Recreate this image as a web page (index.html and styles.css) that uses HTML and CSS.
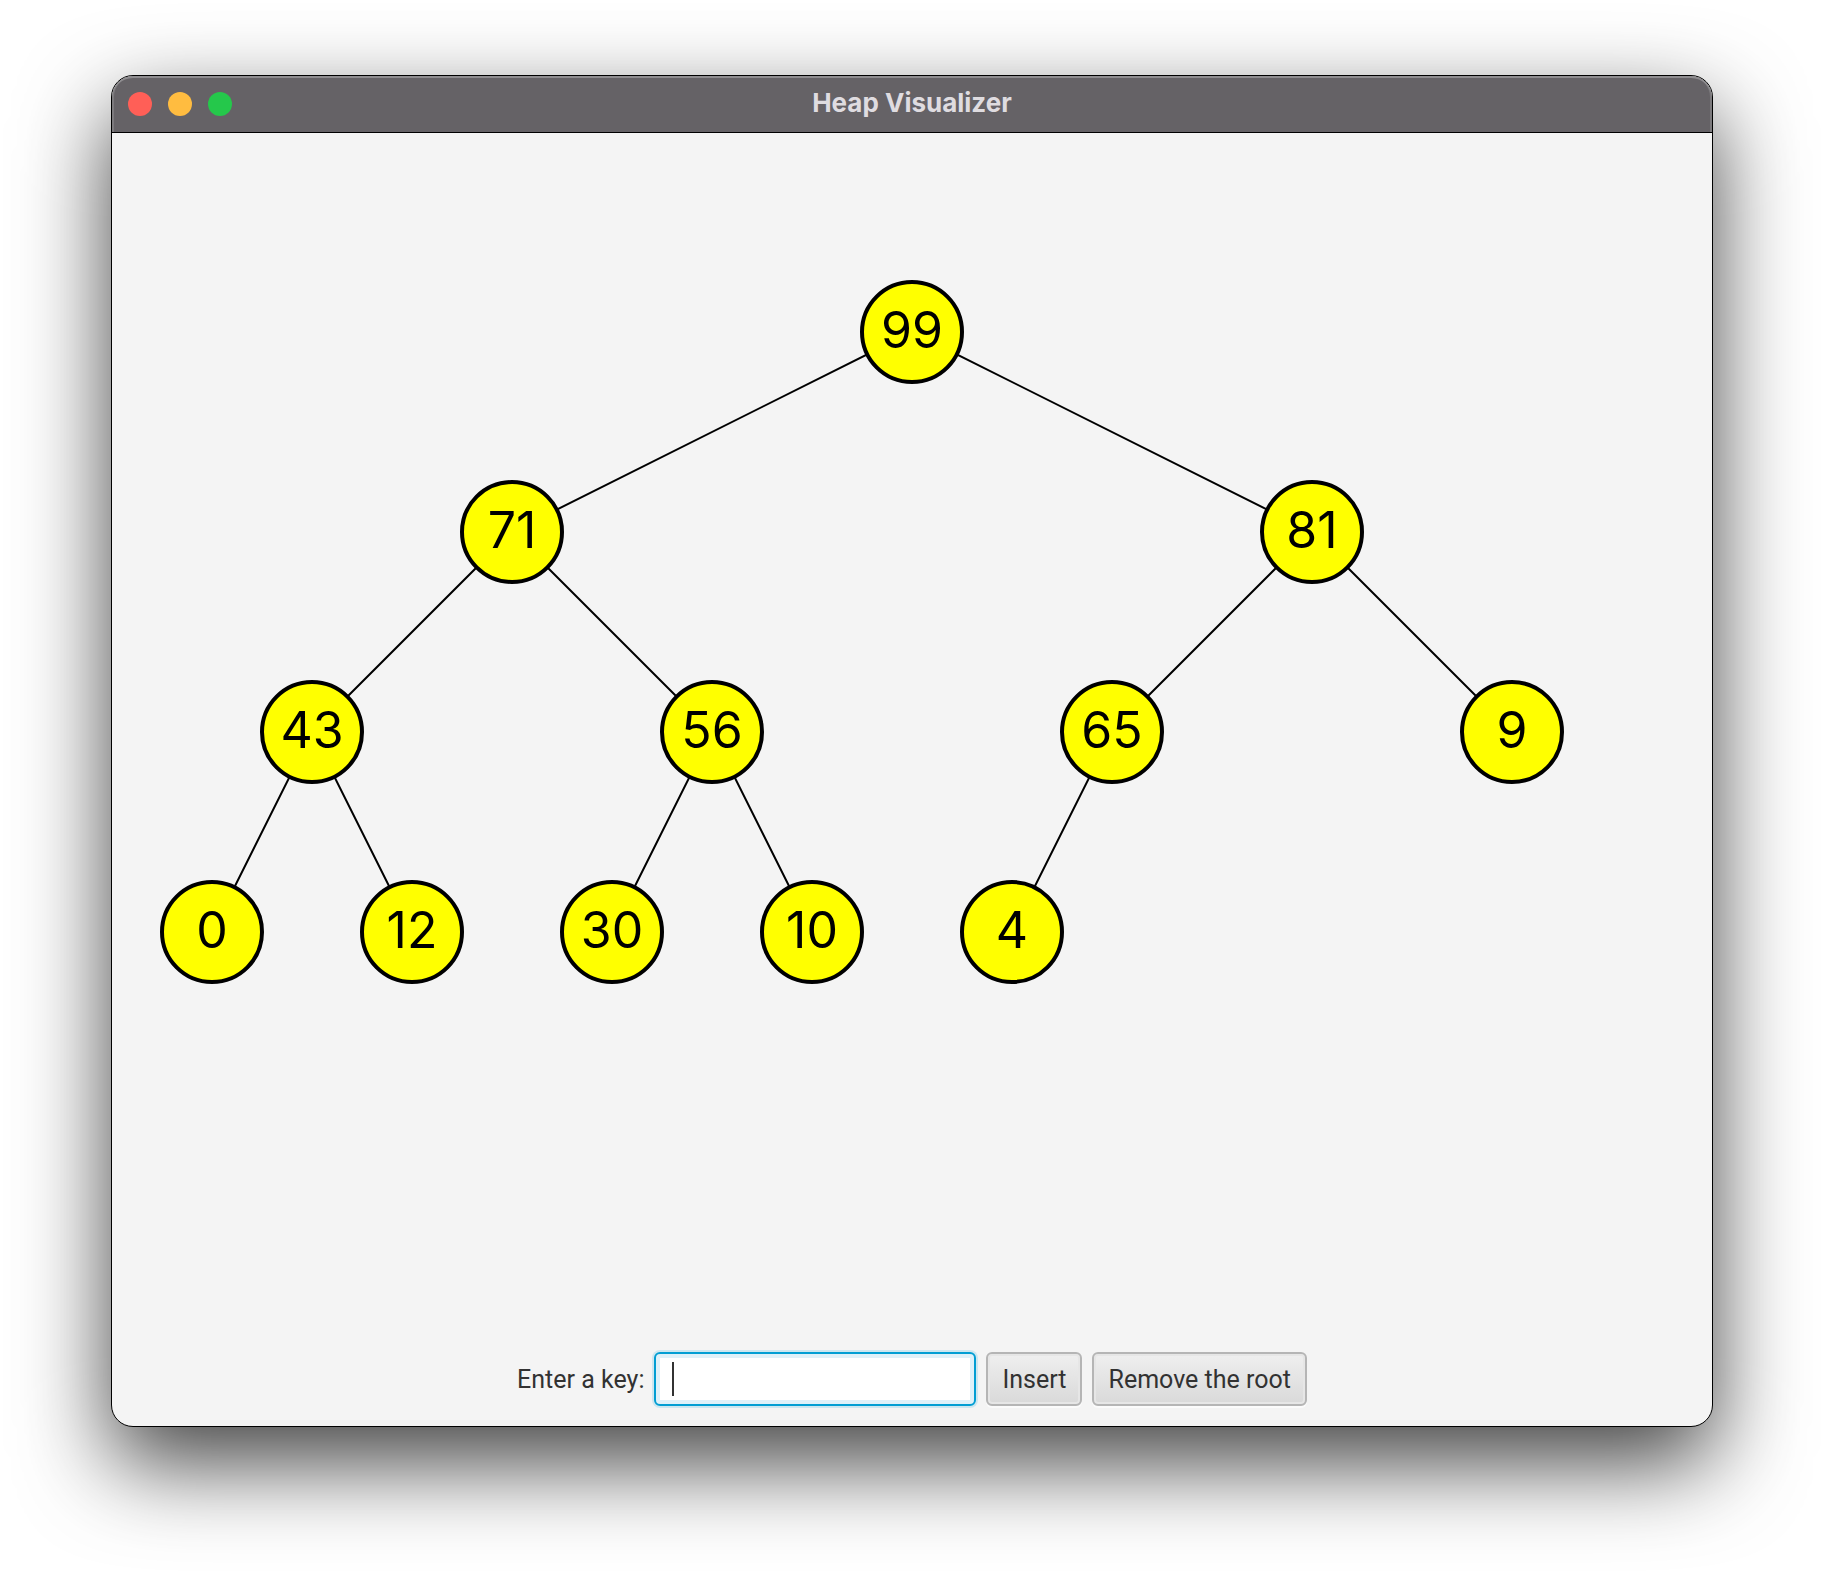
FILE: index.html
```html
<!DOCTYPE html>
<html lang="en">
<head>
<meta charset="utf-8">
<title>Heap Visualizer</title>
<link rel="stylesheet" href="styles.css">
</head>
<body>
<main class="window">
  <header class="titlebar">
    <div class="lights">
      <button class="light close" type="button" aria-label="Close"></button>
      <button class="light minimize" type="button" aria-label="Minimize"></button>
      <button class="light maximize" type="button" aria-label="Maximize"></button>
    </div>
    <h1 class="title">Heap Visualizer</h1>
  </header>
  <svg class="tree" viewBox="0 1 1600 1199" role="img" aria-label="Heap tree">
    <g class="edges">
      <path d="M800 200L400 400M800 200L1200 400"/>
      <path d="M400 400L200 600M400 400L600 600M1200 400L1000 600M1200 400L1400 600"/>
      <path d="M200 600L100 800M200 600L300 800M600 600L500 800M600 600L700 800M1000 600L900 800"/>
    </g>
    <g class="nodes">
      <circle cx="800" cy="200" r="50"/><text x="800" y="216">99</text>
      <circle cx="400" cy="400" r="50"/><text x="400" y="416">71</text>
      <circle cx="1200" cy="400" r="50"/><text x="1200" y="416">81</text>
      <circle cx="200" cy="600" r="50"/><text x="200" y="616">43</text>
      <circle cx="600" cy="600" r="50"/><text x="600" y="616">56</text>
      <circle cx="1000" cy="600" r="50"/><text x="1000" y="616">65</text>
      <circle cx="1400" cy="600" r="50"/><text x="1400" y="616">9</text>
      <circle cx="100" cy="800" r="50"/><text x="100" y="816">0</text>
      <circle cx="300" cy="800" r="50"/><text x="300" y="816">12</text>
      <circle cx="500" cy="800" r="50"/><text x="500" y="816">30</text>
      <circle cx="700" cy="800" r="50"/><text x="700" y="816">10</text>
      <circle cx="900" cy="800" r="50"/><text x="900" y="816">4</text>
    </g>
  </svg>
  <form class="controls">
    <label for="key">Enter a key:</label>
    <input class="field" id="key" type="text" autocomplete="off">
    <button class="button" type="button">Insert</button>
    <button class="button" type="button">Remove the root</button>
  </form>
</main>
</body>
</html>
```
FILE: styles.css
```css
* {
  box-sizing: border-box;
}

body {
  margin: 0;
  padding: 75px 111px 147px;
  background: #fff;
  font-family: Roboto, "Liberation Sans", sans-serif;
  font-size: 25px;
  color: #323232;
}

.window {
  overflow: hidden;
  border: 1px solid #000;
  border-radius: 22px;
  background: #f4f4f4;
  box-shadow: 0 36px 90px rgba(0, 0, 0, 0.74);
}

.titlebar {
  display: grid;
  grid-template-columns: 1fr auto 1fr;
  align-items: center;
  height: 57px;
  padding: 0 16px;
  border-bottom: 1px solid #000;
  border-radius: 21px 21px 0 0;
  background: #656266;
  box-shadow: inset 0 2px #8f8d90, inset 2px 0 #7c7a7d, inset -2px 0 #7c7a7d;
}

.lights {
  display: flex;
  gap: 16px;
}

.light {
  width: 24px;
  height: 24px;
  padding: 0;
  border: 0;
  border-radius: 50%;
}

.close {
  background: #ff5f57;
}

.minimize {
  background: #ffbc40;
}

.maximize {
  background: #25c84b;
}

.title {
  margin: 0;
  padding-bottom: 2px;
  font: bold 26px/52px Inter, sans-serif;
  color: #dfdce0;
}

.tree {
  display: block;
  width: 100%;
  height: auto;
}

.edges {
  fill: none;
  stroke: #000;
  stroke-width: 2;
}

.nodes circle {
  fill: #ff0;
  stroke: #000;
  stroke-width: 4;
}

.nodes text {
  font: 50px Inter, sans-serif;
  fill: #000;
  text-anchor: middle;
}

.controls {
  display: flex;
  justify-content: center;
  align-items: center;
  gap: 10px;
  padding: 20px;
}

.field,
.button {
  height: 54px;
  border-radius: 6px;
  font: inherit;
  color: inherit;
}

/* Focused look: blue ring, pale inner band and a text caret */
.field {
  width: 322px;
  padding: 0 16px;
  border: 2px solid #039ed3;
  outline: none;
  background: linear-gradient(#323232, #323232) 16px center / 2px 34px no-repeat #fff;
  box-shadow: 0 0 0 2px #cde7f0, inset 0 0 0 4px #dff1f9;
}

.button {
  padding: 0 14px;
  border: 2px solid #b5b5b5;
  background: linear-gradient(#efefef, #d9d9d9);
  box-shadow: 0 2px #fbfbfb, inset 0 0 0 2px #e6e6e6, inset 0 2px #fff;
}
```
